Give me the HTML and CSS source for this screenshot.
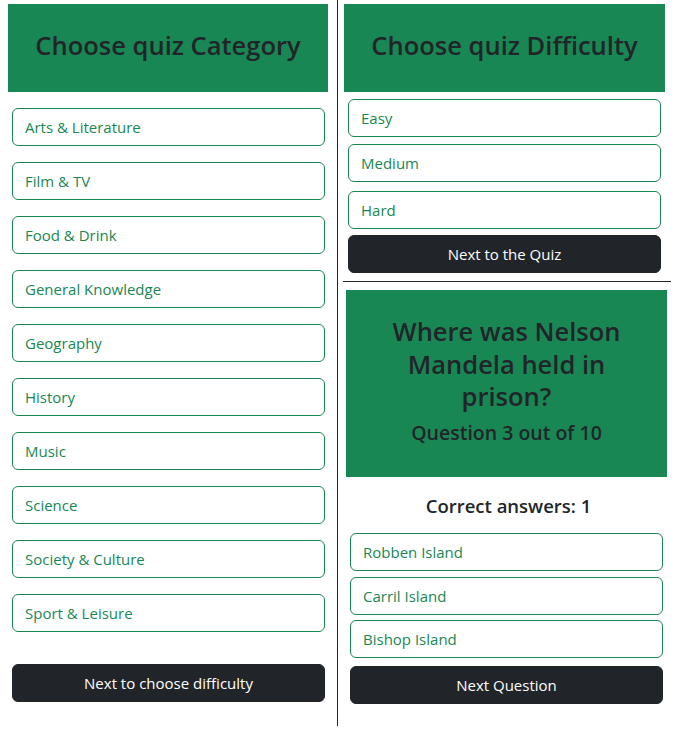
FILE: index.html
```html
<!DOCTYPE html>
<html lang="en">
<head>
<meta charset="utf-8">
<title>Quiz</title>
<link rel="stylesheet" href="styles.css">
</head>
<body>
<div class="app">
  <section class="col col-left">
    <div class="banner"><h2 class="title">Choose quiz Category</h2></div>
    <div class="category-list">
      <button class="btn-outline">Arts &amp; Literature</button>
      <button class="btn-outline">Film &amp; TV</button>
      <button class="btn-outline">Food &amp; Drink</button>
      <button class="btn-outline">General Knowledge</button>
      <button class="btn-outline">Geography</button>
      <button class="btn-outline">History</button>
      <button class="btn-outline">Music</button>
      <button class="btn-outline">Science</button>
      <button class="btn-outline">Society &amp; Culture</button>
      <button class="btn-outline">Sport &amp; Leisure</button>
    </div>
    <button class="btn-dark next-category">Next to choose difficulty</button>
  </section>
  <section class="col col-right">
    <div class="banner"><h2 class="title">Choose quiz Difficulty</h2></div>
    <div class="difficulty-list">
      <button class="btn-outline">Easy</button>
      <button class="btn-outline">Medium</button>
      <button class="btn-outline hard">Hard</button>
      <button class="btn-dark">Next to the Quiz</button>
    </div>
    <hr class="divider">
    <div class="question-box">
      <h2 class="question">Where was Nelson Mandela held in prison?</h2>
      <h4 class="progress">Question 3 out of 10</h4>
    </div>
    <h5 class="score">Correct answers: 1</h5>
    <div class="answer-list">
      <button class="btn-outline">Robben Island</button>
      <button class="btn-outline">Carril Island</button>
      <button class="btn-outline bishop">Bishop Island</button>
      <button class="btn-dark next-question">Next Question</button>
    </div>
  </section>
</div>
</body>
</html>
```
FILE: styles.css
```css
* { box-sizing: border-box; }
html, body { margin: 0; padding: 0; background: #fff; }
body {
  font-family: "Open Sans", "Noto Sans", sans-serif;
  color: #212529;
  font-size: 15px;
}
.app {
  display: flex;
  width: 675px;
}
.col {
  display: flex;
  flex-direction: column;
}
.col-left {
  width: 338px;
  height: 726px;
  padding: 4px 9px 0 8px;
  border-right: 1px solid #212529;
}
.col-right {
  width: 337px;
  padding: 4px 0 0 6px;
}
.banner {
  height: 88px;
  background: #198754;
  display: flex;
  align-items: center;
  justify-content: center;
  padding-bottom: 6px;
}
.col-right .banner { width: 321px; }
.title {
  margin: 0;
  font-size: 25.5px;
  font-weight: 600;
  line-height: 1.2;
  color: #212529;
}
button {
  font-family: inherit;
  font-size: 15px;
  line-height: 1.5;
  height: 38px;
  border-radius: 6px;
  cursor: pointer;
  width: 313px;
  padding: 0 12px;
}
.btn-outline {
  background: #fff;
  color: #198754;
  border: 1px solid #198754;
  text-align: left;
}
.btn-dark {
  background: #212529;
  color: #fff;
  border: 1px solid #212529;
  text-align: center;
}
.category-list {
  display: flex;
  flex-direction: column;
  gap: 16px;
  margin: 16px 0 0 4px;
}
.next-category { margin: 32px 0 0 4px; }
.difficulty-list {
  display: flex;
  flex-direction: column;
  gap: 7px;
  margin: 7px 0 0 4px;
}
.difficulty-list .hard { margin-top: 2px; }
.difficulty-list .btn-dark { margin-top: -1px; }
.divider {
  margin: 8px 4px 0 -1px;
  border: 0;
  border-top: 1px solid #212529;
  height: 0;
}
.question-box {
  margin: 8px 0 0 2px;
  width: 321px;
  height: 187px;
  background: #198754;
  padding: 25px 36px 0;
  text-align: center;
}
.question {
  margin: 0 0 8px;
  font-size: 25.5px;
  font-weight: 600;
  line-height: 32.5px;
}
.progress {
  margin: 0;
  font-size: 19.5px;
  font-weight: 600;
  line-height: 24px;
}
.score {
  margin: 17px 0 0 4px;
  width: 321px;
  text-align: center;
  font-size: 18.5px;
  font-weight: 600;
  line-height: 24px;
}
.answer-list {
  display: flex;
  flex-direction: column;
  gap: 6px;
  margin: 15px 0 0 6px;
}
.answer-list .bishop { margin-top: -1px; }
.answer-list .btn-dark { margin-top: 2px; }
```
